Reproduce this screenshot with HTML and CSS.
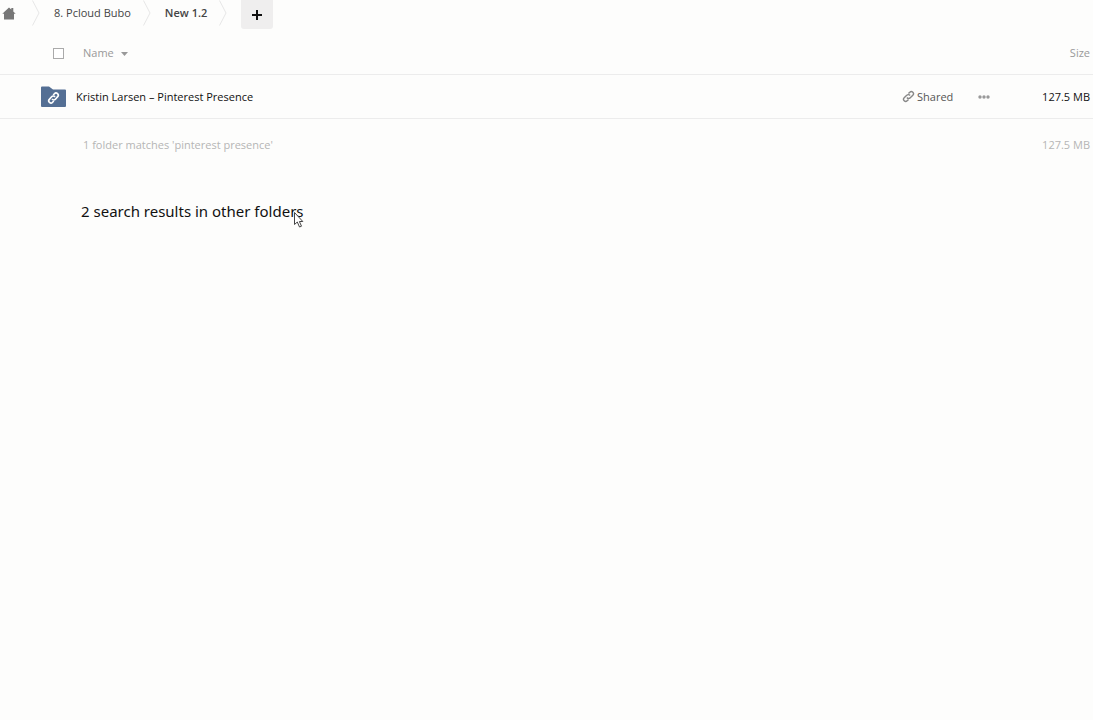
FILE: index.html
```html
<!DOCTYPE html>
<html lang="en">

<head>
    <meta charset="utf-8">
    <meta name="viewport" content="width=device-width, initial-scale=1.0">
    <title>New 1.2</title>
    <link rel="stylesheet" href="styles.css">
</head>

<body>
    <nav class="breadcrumbs">
        <a href="#" class="home" aria-label="Home">
            <svg width="14" height="13" viewBox="0 0 14 13"><path d="M7 0.5L9.3 2.6V1H11.3V4.4L13.7 6.8H12V12.5H2V6.8H0.3Z" fill="#777"/></svg>
        </a>
        <svg class="arrow" width="8" height="26" viewBox="0 0 8 26"><path d="M0.5 0.5L7 13L0.5 25.5" fill="none" stroke="#e6e6e6"/></svg>
        <a href="#" class="crumb">8. Pcloud Bubo</a>
        <svg class="arrow" width="8" height="26" viewBox="0 0 8 26"><path d="M0.5 0.5L7 13L0.5 25.5" fill="none" stroke="#e6e6e6"/></svg>
        <a href="#" class="crumb current">New 1.2</a>
        <svg class="arrow" width="8" height="26" viewBox="0 0 8 26"><path d="M0.5 0.5L7 13L0.5 25.5" fill="none" stroke="#e6e6e6"/></svg>
        <button class="add" aria-label="Add">
            <svg width="12" height="12" viewBox="0 0 12 12"><path d="M6 1V11M1 6H11" stroke="#111" stroke-width="2"/></svg>
        </button>
    </nav>
    <main>
        <table class="files">
            <thead>
                <tr>
                    <th class="col-icon"><input type="checkbox" class="select-all" aria-label="Select all"></th>
                    <th class="col-name">Name <svg class="caret" width="7" height="4" viewBox="0 0 7 4"><path d="M0 0H7L3.5 4Z" fill="#999"/></svg></th>
                    <th class="col-shared"></th>
                    <th class="col-menu"></th>
                    <th class="col-size">Size</th>
                </tr>
            </thead>
            <tbody>
                <tr>
                    <td class="col-icon">
                        <svg class="folder" width="25" height="22" viewBox="0 0 25 22">
                            <path d="M0 1.5Q0 0.5 1 0.5H8L12 3.5H24Q25 3.5 25 4.5V20Q25 21 24 21H1Q0 21 0 20Z" fill="#546f94"/>
                            <g transform="translate(12.5 12) rotate(-48)" fill="none" stroke="#fff" stroke-width="1.6">
                                <path d="M1.8 0.4A2.2 2.2 0 0 0 -0.4 -2.2H-3.8A2.2 2.2 0 0 0 -3.8 2.2H-2"/>
                                <path d="M-1.8 -0.4A2.2 2.2 0 0 0 0.4 2.2H3.8A2.2 2.2 0 0 0 3.8 -2.2H2"/>
                            </g>
                        </svg>
                    </td>
                    <td class="col-name"><a href="#" class="file-name">Kristin Larsen – Pinterest Presence</a></td>
                    <td class="col-shared">
                        <span class="shared">
                            <svg width="13" height="13" viewBox="0 0 13 13">
                                <g transform="translate(6.5 6.5) rotate(-45)" fill="none" stroke="#888" stroke-width="1.4">
                                    <path d="M1.8 0.4A2.1 2.1 0 0 0 -0.4 -2.1H-4A2.1 2.1 0 0 0 -4 2.1H-2"/>
                                    <path d="M-1.8 -0.4A2.1 2.1 0 0 0 0.4 2.1H4A2.1 2.1 0 0 0 4 -2.1H2"/>
                                </g>
                            </svg>
                            Shared
                        </span>
                    </td>
                    <td class="col-menu">
                        <button class="more" aria-label="More">
                            <svg width="12" height="4" viewBox="0 0 12 4"><g fill="#999"><circle cx="2" cy="2" r="1.7"/><circle cx="6" cy="2" r="1.7"/><circle cx="10" cy="2" r="1.7"/></g></svg>
                        </button>
                    </td>
                    <td class="col-size">127.5 MB</td>
                </tr>
            </tbody>
            <tfoot>
                <tr>
                    <td class="col-icon"></td>
                    <td class="col-name">1 folder matches 'pinterest presence'</td>
                    <td class="col-shared"></td>
                    <td class="col-menu"></td>
                    <td class="col-size">127.5 MB</td>
                </tr>
            </tfoot>
        </table>
        <div class="other-results">
            <h2>2 search results in other folders</h2>
            <svg class="cursor" width="11" height="18" viewBox="0 0 11 18"><path d="M1.5 1.5V13.5L4.3 11L6.5 16L8.5 15.2L6.4 10.5H9.8Z" fill="#fff" stroke="#444"/></svg>
        </div>
    </main>
</body>

</html>
```
FILE: styles.css
```css
* {
    box-sizing: border-box;
    margin: 0;
    padding: 0;
}

body {
    min-height: 100vh;
    background-color: #fdfdfc;
    color: #111;
    font-family: "Open Sans", "Noto Sans", sans-serif;
    font-size: 11px;
    line-height: 18px;
}

a {
    color: inherit;
    text-decoration: none;
}

button {
    border: 0;
    background: none;
    cursor: pointer;
}

svg {
    display: block;
}

.breadcrumbs {
    display: flex;
    height: 29px;
    padding-left: 2px;
    color: #444;
}

.home {
    padding: 7px 16px 0 0;
}

.crumb {
    padding: 4px 12px 0 14px;
}

.current {
    font-weight: 600;
}

.add {
    display: flex;
    align-items: center;
    justify-content: center;
    width: 32px;
    margin-left: 14px;
    background-color: #efeeee;
    border-radius: 0 0 3px 3px;
}

.files {
    width: 100%;
    margin-top: 4px;
    border-collapse: collapse;
    table-layout: fixed;
}

th {
    height: 41px;
    color: #999;
    font-weight: 400;
    text-align: left;
}

td {
    height: 44px;
    padding-top: 1px;
}

thead tr,
tbody tr {
    border-bottom: 1px solid #ececec;
}

.col-icon {
    width: 76px;
    padding-left: 41px;
}

.col-shared {
    width: 61px;
}

.col-menu {
    width: 42px;
}

.col-size {
    width: 88px;
    padding-right: 3px;
    text-align: right;
}

th.col-name,
tfoot .col-name {
    padding-left: 7px;
}

.select-all {
    display: block;
    width: 11px;
    height: 11px;
    margin-left: 12px;
    appearance: none;
    border: 1px solid #aaa;
    background-color: #fff;
}

.caret {
    display: inline-block;
    margin-left: 4px;
    vertical-align: middle;
}

.shared {
    display: flex;
    align-items: center;
    gap: 2px;
    color: #555;
}

.more {
    display: block;
    margin: 0 auto;
    padding: 4px;
}

tfoot td {
    height: 52px;
    color: #b5b5b5;
}

.other-results {
    position: relative;
    width: fit-content;
    margin: 29px 0 0 81px;
}

h2 {
    font-family: "Noto Sans", "Open Sans", sans-serif;
    font-size: 15px;
    font-weight: 400;
    line-height: 24px;
}

/* mouse pointer over the end of the heading */
.cursor {
    position: absolute;
    right: 0;
    top: 12px;
}
```
